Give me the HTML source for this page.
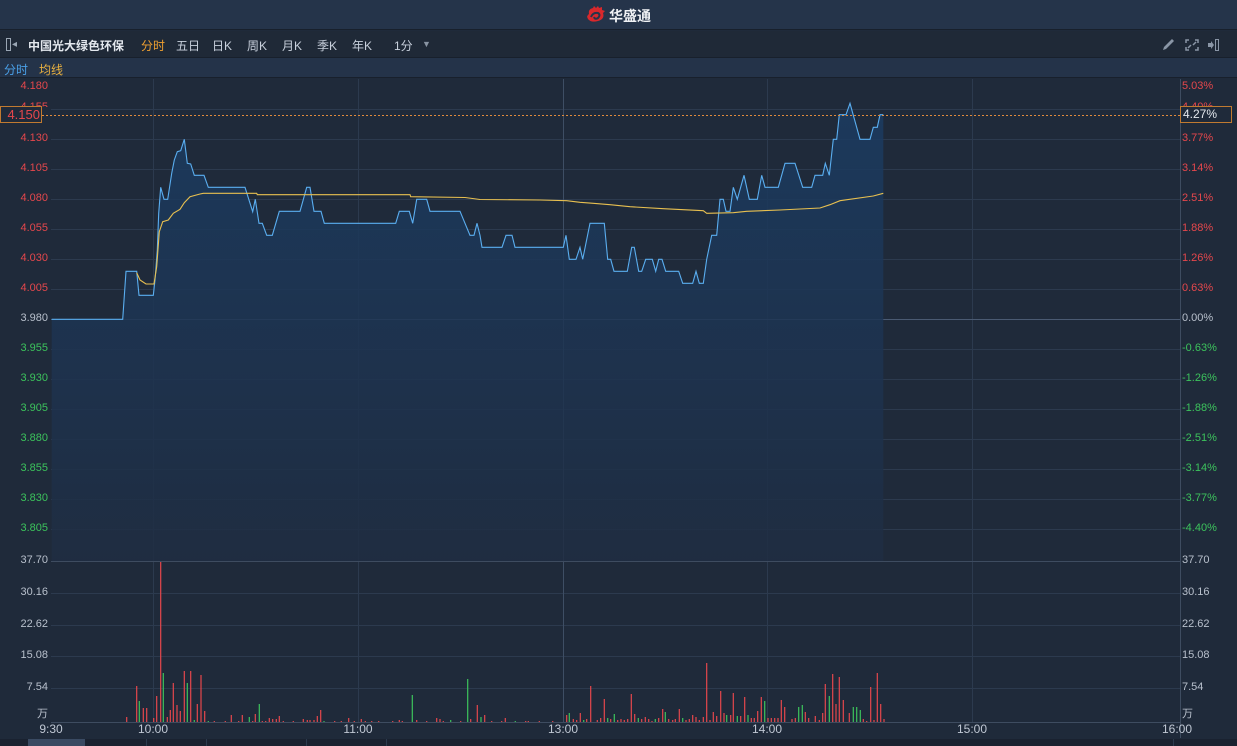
<!DOCTYPE html>
<html><head><meta charset="utf-8">
<style>
*{margin:0;padding:0;box-sizing:border-box}
body{width:1237px;height:746px;background:#1f2a3a;font-family:"Liberation Sans","Noto Sans CJK SC",sans-serif;position:relative;overflow:hidden;color:#c8d0dc}
.a{position:absolute;white-space:nowrap}
#top{left:0;top:0;width:1237px;height:30px;background:#25344a;border-bottom:1px solid #18202c}
#tb{left:0;top:31px;width:1237px;height:27px;background:#1f2937;border-bottom:1px solid #18202c}
#row{left:0;top:58px;width:1237px;height:20px;background:#243349;border-bottom:1px solid #18202c}
.t{font-size:12px;top:37px;color:#c8d0dc}
.l{font-size:11px;width:48px;text-align:right;left:0}
.r{font-size:11px;left:1182px}
.red{color:#e5474c}.grn{color:#3cc35c}.gry{color:#b8c0cc}
.tm{font-size:12px;top:722px;width:50px;text-align:center;color:#c0c8d4}
</style></head><body>
<div id="top" class="a"></div>
<div class="a" style="left:585px;top:5px;width:22px;height:20px">
<svg width="22" height="20" viewBox="0 0 22 20"><path d="M4 9 Q3 4 8 3 L9 1 L11 3 L13 1 L14 3 L17 2 L17 5 L20 6 L18 8 Q20 14 13 16 Q6 18 3 14 Q1 11 4 9Z" fill="#d8282c"/><path d="M6 12 Q8 7 13 8 Q16 10 13 13 Q10 15 9 12" stroke="#25344a" stroke-width="2" fill="none"/></svg></div>
<div class="a" style="left:609px;top:6px;font-size:14px;font-weight:bold;color:#f0f2f5">华盛通</div>
<div id="tb" class="a"></div>
<div class="a" style="left:6px;top:38px;width:5px;height:13px;border:1.5px solid #9aa6b4"></div>
<div class="a" style="left:12px;top:39px;font-size:10px;color:#9aa6b4">◂</div>
<div class="a t" style="left:28px;font-weight:bold;color:#e4e8ee">中国光大绿色环保</div>
<div class="a t" style="left:141px;color:#f0a030">分时</div>
<div class="a t" style="left:176px">五日</div>
<div class="a t" style="left:212px">日K</div>
<div class="a t" style="left:247px">周K</div>
<div class="a t" style="left:282px">月K</div>
<div class="a t" style="left:317px">季K</div>
<div class="a t" style="left:352px">年K</div>
<div class="a t" style="left:394px">1分</div>
<div class="a" style="left:422px;top:39px;font-size:9px;color:#8994a3">▼</div>
<svg class="a" style="left:1160px;top:36px" width="60" height="18" viewBox="0 0 60 18">
<path d="M3 14 L4 11 L12 3 L14 5 L6 13Z" fill="#8a96a6"/>
<g stroke="#8a96a6" stroke-width="1.5" fill="none"><path d="M29 4h-3v3M35 4h3v3M29 14h-3v-3M35 14h3v-3M28 12l3-3M36 6l-3 3"/></g>
<path d="M48 7h3v-2l3 4-3 4v-2h-3z" fill="#8a96a6"/><rect x="55.5" y="3.5" width="3" height="11" stroke="#8a96a6" fill="none"/>
</svg>
<div id="row" class="a"></div>
<div class="a" style="left:4px;top:61px;font-size:12px;color:#4aa0e8">分时</div>
<div class="a" style="left:39px;top:61px;font-size:12px;color:#e8b040">均线</div>

<svg class="a" style="left:0;top:0" width="1237" height="746">
<defs><linearGradient id="g" x1="0" y1="0" x2="0" y2="1"><stop offset="0" stop-color="#1b3c62"/><stop offset="0.5" stop-color="#1d3452"/><stop offset="1" stop-color="#1f2d42"/></linearGradient></defs>
<g stroke="#2c3a4e" stroke-width="1">
<path d="M51 109.5H1180M51 139.5H1180M51 169.5H1180M51 199.5H1180M51 229.5H1180M51 259.5H1180M51 289.5H1180M51 349.5H1180M51 379.5H1180M51 409.5H1180M51 439.5H1180M51 469.5H1180M51 499.5H1180M51 529.5H1180M51 593.5H1180M51 625.5H1180M51 656.5H1180M51 688.5H1180"/>
<path d="M153.5 79V722M358.5 79V722M767.5 79V722M972.5 79V722"/>
</g>
<path d="M563.5 79V722" stroke="#3e4e64"/>
<path d="M1180.5 79V738M51 722.5H1180M51 561.5H1180" stroke="#3e4c60"/>
<path d="M51 319.5H1180" stroke="#4a5a72"/>
<path d="M51.7,319.3 L122.7,319.3 L126,271.3 L136.7,271.3 L139,295.3 L153.3,295.3 L155,280 L157.3,250 L158.7,213.3 L160.7,187.3 L164,199.3 L167.7,199.3 L171.7,173.3 L174.3,160 L177.3,151.7 L180.7,150.7 L184.3,139.3 L187.3,163.3 L190.7,164 L194.3,175.3 L204,175.3 L208.3,187.3 L245,187.3 L252.7,211.7 L255.3,199.3 L259,223.3 L262.3,223.3 L266.7,235.3 L272.3,235.3 L279.3,211.3 L300,211.3 L306.7,187.3 L310,187.3 L314,211.3 L321,211.3 L324.3,223.3 L395.7,223.3 L399.3,211.3 L409.3,211.3 L412.7,223.3 L416.7,199.3 L426.7,199.3 L430,211.3 L460,211.3 L465,223.3 L470,235.3 L474,235.3 L477,223.3 L480,235.3 L482,247.3 L502,247.3 L506,235.3 L512,235.3 L515,247.3 L563.3,247.3 L566,235.3 L569.3,259.3 L576,259.3 L580,247.3 L582.7,259.3 L590,223.3 L604.3,223.3 L607.7,259.3 L610.7,259.3 L614,271.3 L627.3,271.3 L631.7,247.3 L634.3,247.3 L638.7,271.3 L641.7,271.3 L645.7,259.3 L652.3,259.3 L655.7,271.3 L658.7,259.3 L662,259.3 L665.7,271.3 L678.7,271.3 L682.7,283.3 L692.7,283.3 L696,271.3 L699.3,283.3 L703.3,283.3 L706.7,259.3 L711.7,235.3 L716.7,235.3 L720,199.3 L723.3,199.3 L726,211.3 L730,211.3 L733.3,187.3 L737.3,199.3 L744,175.3 L749.3,199.3 L757.3,199.3 L761.7,175.3 L765,187.3 L778.3,187.3 L785,163.3 L795,163.3 L802.7,187.3 L811.7,187.3 L815,175.3 L822.7,175.3 L825.3,163.3 L829.3,175.3 L833.3,139.3 L836.7,139.3 L839.3,114.7 L846,114.7 L850,103.3 L860,139.3 L870,139.3 L873.3,127.3 L877.3,127.3 L880,114.7 L883.3,114.7 L883.3,561 L51.7,561Z" fill="url(#g)" opacity="0.85"/>
<path d="M51.7,319.3 L122.7,319.3 L126,271.3 L136.7,271.3 L139,295.3 L153.3,295.3 L155,280 L157.3,250 L158.7,213.3 L160.7,187.3 L164,199.3 L167.7,199.3 L171.7,173.3 L174.3,160 L177.3,151.7 L180.7,150.7 L184.3,139.3 L187.3,163.3 L190.7,164 L194.3,175.3 L204,175.3 L208.3,187.3 L245,187.3 L252.7,211.7 L255.3,199.3 L259,223.3 L262.3,223.3 L266.7,235.3 L272.3,235.3 L279.3,211.3 L300,211.3 L306.7,187.3 L310,187.3 L314,211.3 L321,211.3 L324.3,223.3 L395.7,223.3 L399.3,211.3 L409.3,211.3 L412.7,223.3 L416.7,199.3 L426.7,199.3 L430,211.3 L460,211.3 L465,223.3 L470,235.3 L474,235.3 L477,223.3 L480,235.3 L482,247.3 L502,247.3 L506,235.3 L512,235.3 L515,247.3 L563.3,247.3 L566,235.3 L569.3,259.3 L576,259.3 L580,247.3 L582.7,259.3 L590,223.3 L604.3,223.3 L607.7,259.3 L610.7,259.3 L614,271.3 L627.3,271.3 L631.7,247.3 L634.3,247.3 L638.7,271.3 L641.7,271.3 L645.7,259.3 L652.3,259.3 L655.7,271.3 L658.7,259.3 L662,259.3 L665.7,271.3 L678.7,271.3 L682.7,283.3 L692.7,283.3 L696,271.3 L699.3,283.3 L703.3,283.3 L706.7,259.3 L711.7,235.3 L716.7,235.3 L720,199.3 L723.3,199.3 L726,211.3 L730,211.3 L733.3,187.3 L737.3,199.3 L744,175.3 L749.3,199.3 L757.3,199.3 L761.7,175.3 L765,187.3 L778.3,187.3 L785,163.3 L795,163.3 L802.7,187.3 L811.7,187.3 L815,175.3 L822.7,175.3 L825.3,163.3 L829.3,175.3 L833.3,139.3 L836.7,139.3 L839.3,114.7 L846,114.7 L850,103.3 L860,139.3 L870,139.3 L873.3,127.3 L877.3,127.3 L880,114.7 L883.3,114.7" fill="none" stroke="#5aaef0" stroke-width="1.1"/>
<path d="M136.7,272.7 L140,280 L146,284 L154,284 L156.7,266.7 L159.3,231.7 L162.7,221.7 L168.3,220 L173.3,213.3 L180,209.3 L184.3,202.7 L190,196.7 L200,194 L203.3,193.3 L256.7,193.3 L257.3,194.7 L410,194.7 L410.7,196.7 L465,197.5 L480,199.5 L540,200 L566.7,200.7 L580,202.3 L593.3,203.3 L610,204.7 L630,206.7 L663.3,208.7 L703.3,210.7 L706.7,213.3 L733.3,212.7 L746.7,211.3 L780,210 L820,208 L830,204.7 L840,200.7 L873.3,196 L883.3,193.3" fill="none" stroke="#e8c050" stroke-width="1.1"/>
<path d="M42 115.5H1180" stroke="#e08a3c" stroke-dasharray="2,2"/>
<path stroke="#e5474c" stroke-width="1.2" d="M126.7 722v-5M136.7 722v-36M143.3 722v-14M146.7 722v-14M153.7 722v-4M156.7 722v-26M160.7 722v-160M167.3 722v-5M170.3 722v-12M173.3 722v-39M177 722v-17M180.3 722v-11M184.3 722v-51M190.7 722v-51M197.3 722v-18M201 722v-47M204.7 722v-11M214.3 722v-1M225.3 722v-1M231.3 722v-7M238.7 722v-1M242.3 722v-7M252.7 722v-1M255.3 722v-8M262.3 722v-1M265.7 722v-1M269.3 722v-4M272.7 722v-3M276.3 722v-3M279.3 722v-6M283.3 722v-1M293.3 722v-1M303.3 722v-3M307.3 722v-2M310 722v-2M314 722v-2M317.3 722v-6M320.7 722v-12M334.7 722v-1M341.3 722v-1M348.7 722v-4M354.3 722v-1M361.3 722v-3M365.3 722v-1M371.7 722v-1M378.7 722v-1M392.7 722v-1M399.3 722v-2M402.3 722v-1M416.7 722v-2M426.7 722v-1M436.7 722v-4M440 722v-3M443.3 722v-1M460.7 722v-1M470.7 722v-3M477.3 722v-17M484.7 722v-7M491.7 722v-1M501.7 722v-1M505.3 722v-4M525.7 722v-1M528.3 722v-1M539.3 722v-1M552.7 722v-1M566.7 722v-7M573.3 722v-3M576.7 722v-2M580.3 722v-9M586.7 722v-3M590.7 722v-36M597.3 722v-2M600.7 722v-4M604.3 722v-23M610.7 722v-3M617.7 722v-2M621 722v-3M624.3 722v-2M627.7 722v-3M631.3 722v-28M634.7 722v-8M641.7 722v-3M645.3 722v-5M648.7 722v-3M652 722v-1M658.7 722v-4M662.7 722v-13M668.7 722v-3M672.7 722v-2M675.3 722v-3M679.3 722v-13M686 722v-2M689.3 722v-3M692.7 722v-7M696 722v-5M699.3 722v-2M703.3 722v-5M706.7 722v-59M710 722v-2M713.3 722v-10M716.7 722v-6M720.7 722v-31M724 722v-9M730.7 722v-7M733.3 722v-29M740.7 722v-6M744.7 722v-25M751.3 722v-4M754.3 722v-4M757.7 722v-11M761.3 722v-25M768 722v-4M771.3 722v-4M774.7 722v-4M778 722v-4M781.3 722v-22M784.7 722v-15M792 722v-3M795.3 722v-4M805.3 722v-10M808.7 722v-4M815.3 722v-6M819.3 722v-2M822.7 722v-9M825.3 722v-38M832.7 722v-48M836 722v-18M839.3 722v-45M843.3 722v-22M849.3 722v-9M863.3 722v-3M866.7 722v-1M870.7 722v-35M874 722v-2M877.3 722v-49M880.7 722v-18M884 722v-3"/>
<path stroke="#3cc35c" stroke-width="1.2" d="M139.3 722v-21M163.3 722v-49M187.3 722v-39M194.3 722v-2M208.3 722v-1M249.3 722v-5M259.3 722v-18M324 722v-1M412.3 722v-27M450.7 722v-2M467.7 722v-43M481 722v-5M515.3 722v-1M569.3 722v-9M583.7 722v-2M607.7 722v-4M614.3 722v-8M638.3 722v-4M655.3 722v-3M665.3 722v-10M682.7 722v-4M726.7 722v-7M737.3 722v-6M748 722v-7M764.7 722v-21M798.7 722v-15M802.3 722v-17M829.3 722v-26M853.3 722v-15M856.7 722v-15M860.3 722v-12"/>
<rect x="0" y="739" width="1237" height="7" fill="#1a2230"/>
<rect x="28" y="739" width="57" height="7" fill="#3a4a62"/>
<path d="M146.5 739v7M206.5 739v7M306.5 739v7M386.5 739v7M1173.5 739v7" stroke="#2c3a4e"/>
</svg>

<div class="a l red" style="top:80px">4.180</div>
<div class="a l red" style="top:101px;height:6px;overflow:hidden">4.155</div>
<div class="a" style="left:0;top:106px;width:42px;height:17px;border:1px solid #c07a30;background:#1f2a3a;font-size:13px;color:#e5474c;text-align:right;padding-right:1px;line-height:15px">4.150</div>
<div class="a l red" style="top:132px">4.130</div>
<div class="a l red" style="top:162px">4.105</div>
<div class="a l red" style="top:192px">4.080</div>
<div class="a l red" style="top:222px">4.055</div>
<div class="a l red" style="top:252px">4.030</div>
<div class="a l red" style="top:282px">4.005</div>
<div class="a l gry" style="top:312px">3.980</div>
<div class="a l grn" style="top:342px">3.955</div>
<div class="a l grn" style="top:372px">3.930</div>
<div class="a l grn" style="top:402px">3.905</div>
<div class="a l grn" style="top:432px">3.880</div>
<div class="a l grn" style="top:462px">3.855</div>
<div class="a l grn" style="top:492px">3.830</div>
<div class="a l grn" style="top:522px">3.805</div>

<div class="a r red" style="top:80px">5.03%</div>
<div class="a r red" style="top:101px;height:6px;overflow:hidden">4.40%</div>
<div class="a" style="left:1180px;top:106px;width:52px;height:17px;border:1px solid #c07a30;background:#1f2a3a;font-size:12px;color:#e4e8ee;padding-left:2px;line-height:15px">4.27%</div>
<div class="a r red" style="top:132px">3.77%</div>
<div class="a r red" style="top:162px">3.14%</div>
<div class="a r red" style="top:192px">2.51%</div>
<div class="a r red" style="top:222px">1.88%</div>
<div class="a r red" style="top:252px">1.26%</div>
<div class="a r red" style="top:282px">0.63%</div>
<div class="a r gry" style="top:312px">0.00%</div>
<div class="a r grn" style="top:342px">-0.63%</div>
<div class="a r grn" style="top:372px">-1.26%</div>
<div class="a r grn" style="top:402px">-1.88%</div>
<div class="a r grn" style="top:432px">-2.51%</div>
<div class="a r grn" style="top:462px">-3.14%</div>
<div class="a r grn" style="top:492px">-3.77%</div>
<div class="a r grn" style="top:522px">-4.40%</div>

<div class="a l gry" style="top:554px">37.70</div>
<div class="a l gry" style="top:586px">30.16</div>
<div class="a l gry" style="top:618px">22.62</div>
<div class="a l gry" style="top:649px">15.08</div>
<div class="a l gry" style="top:681px">7.54</div>
<div class="a l gry" style="top:705px">万</div>
<div class="a r gry" style="top:554px">37.70</div>
<div class="a r gry" style="top:586px">30.16</div>
<div class="a r gry" style="top:618px">22.62</div>
<div class="a r gry" style="top:649px">15.08</div>
<div class="a r gry" style="top:681px">7.54</div>
<div class="a r gry" style="top:705px">万</div>

<div class="a tm" style="left:26px">9:30</div>
<div class="a tm" style="left:128px">10:00</div>
<div class="a tm" style="left:333px">11:00</div>
<div class="a tm" style="left:538px">13:00</div>
<div class="a tm" style="left:742px">14:00</div>
<div class="a tm" style="left:947px">15:00</div>
<div class="a tm" style="left:1152px">16:00</div>
</body></html>
